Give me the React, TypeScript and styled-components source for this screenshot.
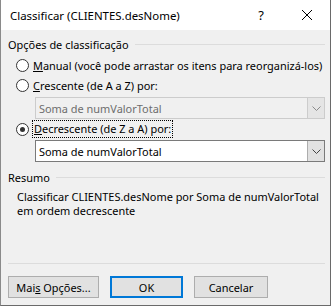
import React from 'react'
import styled, { createGlobalStyle } from 'styled-components'

const GlobalStyle = createGlobalStyle`
  html, body { margin: 0; padding: 0; background: #ffffff; }
  body { font-family: "Noto Sans", "Liberation Sans", sans-serif; font-size: 10.95px; color: #000; }
`

const Window = styled.div`
  width: 331px;
  height: 306px;
  box-sizing: border-box;
  border-left: 1px solid #8a8a8a;
  border-right: 1px solid #6a6a6a;
  border-bottom: 1px solid #6a6a6a;
  background: #f0f0f0;
  display: flex;
  flex-direction: column;
`

const TitleBar = styled.div`
  height: 30px;
  background: #ffffff;
  display: flex;
  align-items: center;
  padding-left: 9px;
  flex-shrink: 0;
`

const Title = styled.span`
  flex: 1;
  font-size: 11.45px;
  white-space: nowrap;
`

const TitleButton = styled.span<{ $w: number }>`
  width: ${p => p.$w}px;
  height: 30px;
  display: flex;
  align-items: center;
  justify-content: center;
  font-size: 13px;
`

const Body = styled.div`
  flex: 1;
  display: flex;
  flex-direction: column;
  padding: 0 5px 7px 7px;
`

const GroupHeader = styled.div<{ $top: number }>`
  display: flex;
  align-items: center;
  gap: 6px;
  height: 15px;
  margin-top: ${p => p.$top}px;
  white-space: nowrap;
`

const Rule = styled.div`
  flex: 1;
  height: 1px;
  background: #dcdcdc;
`

const RadioRow = styled.label<{ $top?: number }>`
  display: flex;
  align-items: center;
  height: 20px;
  margin-top: ${p => p.$top ?? 0}px;
  padding-left: 8px;
  gap: 4px;
  white-space: nowrap;
`

const Circle = styled.span<{ $checked?: boolean }>`
  flex-shrink: 0;
  width: 13px;
  height: 13px;
  box-sizing: border-box;
  border-radius: 50%;
  border: 1px solid #333333;
  background: #ffffff;
  display: flex;
  align-items: center;
  justify-content: center;
  &::after {
    content: '';
    display: ${p => (p.$checked ? 'block' : 'none')};
    width: 5px;
    height: 5px;
    border-radius: 50%;
    background: #333333;
  }
`

const Focus = styled.span`
  outline: 1px dotted #000;
  padding: 0 1px;
  line-height: 16px;
`

const Select = styled.div<{ $disabled?: boolean; $top: number }>`
  margin: ${p => p.$top}px 0 0 27px;
  height: 22px;
  box-sizing: border-box;
  border: 1px solid ${p => (p.$disabled ? '#cccccc' : '#7a7a7a')};
  background: ${p => (p.$disabled ? '#f0f0f0' : '#ffffff')};
  color: ${p => (p.$disabled ? '#6d6d6d' : '#000000')};
  display: flex;
  align-items: center;
`

const SelectText = styled.span`
  flex: 1;
  padding-left: 3px;
`

const Arrow = styled.span<{ $disabled?: boolean }>`
  width: 17px;
  height: 20px;
  box-sizing: border-box;
  border-left: 1px solid ${p => (p.$disabled ? '#cccccc' : '#adadad')};
  background: ${p => (p.$disabled ? '#e5e5e5' : '#e1e1e1')};
  display: flex;
  align-items: center;
  justify-content: center;
`

const Summary = styled.p`
  margin: 5px 0 0 9px;
  line-height: 14px;
  white-space: nowrap;
`

const Separator = styled.div`
  height: 1px;
  background: #dcdcdc;
  margin-top: auto;
`

const ButtonRow = styled.div`
  display: flex;
  gap: 11px;
  margin-top: 12px;
`

const Button = styled.button<{ $w: number; $default?: boolean }>`
  width: ${p => p.$w}px;
  height: 22px;
  box-sizing: border-box;
  font: inherit;
  color: #000;
  background: #e1e1e1;
  border: ${p => (p.$default ? '2px solid #0078d7' : '1px solid #adadad')};
  padding: 0;
`

function Chevron({ color }: { color: string }) {
  return (
    <svg width="9" height="5" viewBox="0 0 9 5">
      <path d="M0.5 0.5 L4.5 4.5 L8.5 0.5" fill="none" stroke={color} strokeWidth="1" />
    </svg>
  )
}

function CloseIcon() {
  return (
    <svg width="10" height="10" viewBox="0 0 10 10">
      <path d="M0 0 L10 10 M10 0 L0 10" stroke="#000" strokeWidth="1" />
    </svg>
  )
}

export default function App() {
  return (
    <Window>
      <GlobalStyle />
      <TitleBar>
        <Title>Classificar (CLIENTES.desNome)</Title>
        <TitleButton $w={46}>?</TitleButton>
        <TitleButton $w={46}><CloseIcon /></TitleButton>
      </TitleBar>
      <Body>
        <GroupHeader $top={7}>
          Opções de classificação
          <Rule />
        </GroupHeader>
        <RadioRow $top={3}>
          <Circle />
          <span><u>M</u>anual (você pode arrastar os itens para reorganizá-los)</span>
        </RadioRow>
        <RadioRow>
          <Circle />
          <span><u>C</u>rescente (de A a Z) por:</span>
        </RadioRow>
        <Select $disabled $top={2}>
          <SelectText>Soma de numValorTotal</SelectText>
          <Arrow $disabled><Chevron color="#8a8a8a" /></Arrow>
        </Select>
        <RadioRow>
          <Circle $checked />
          <Focus><u>D</u>ecrescente (de Z a A) por:</Focus>
        </RadioRow>
        <Select $top={1}>
          <SelectText>Soma de numValorTotal</SelectText>
          <Arrow><Chevron color="#444444" /></Arrow>
        </Select>
        <GroupHeader $top={8}>
          Resumo
          <Rule />
        </GroupHeader>
        <Summary>
          Classificar CLIENTES.desNome por Soma de numValorTotal
          <br />
          em ordem decrescente
        </Summary>
        <Separator />
        <ButtonRow>
          <Button $w={91}>Mai<u>s</u> Opções...</Button>
          <Button $w={73} $default>OK</Button>
          <Button $w={74}>Cancelar</Button>
        </ButtonRow>
      </Body>
    </Window>
  )
}
